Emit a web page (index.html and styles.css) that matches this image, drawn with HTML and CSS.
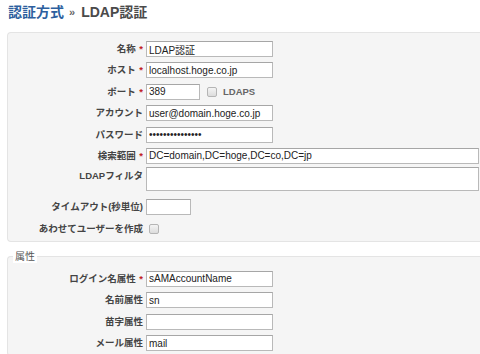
FILE: index.html
```html
<!DOCTYPE html>
<html lang="ja">
<head>
<meta charset="utf-8">
<link rel="stylesheet" href="styles.css">
</head>
<body>
<h1 class="title"><span class="crumb">認証方式</span><span class="sep">»</span><span class="current">LDAP認証</span></h1>

<div class="panel">
  <div class="row">
    <label class="lbl">名称 <span class="req">*</span></label>
    <div class="field"><input class="inp" type="text" value="LDAP認証"></div>
  </div>
  <div class="row">
    <label class="lbl">ホスト <span class="req">*</span></label>
    <div class="field"><input class="inp" type="text" value="localhost.hoge.co.jp"></div>
  </div>
  <div class="row">
    <label class="lbl">ポート <span class="req">*</span></label>
    <div class="field"><input class="inp port" type="text" value="389"><span class="chk"></span><span class="chk-text">LDAPS</span></div>
  </div>
  <div class="row">
    <label class="lbl">アカウント</label>
    <div class="field"><input class="inp" type="text" value="user@domain.hoge.co.jp"></div>
  </div>
  <div class="row">
    <label class="lbl">パスワード</label>
    <div class="field"><input class="inp" type="password" value="passwordpasswor"></div>
  </div>
  <div class="row">
    <label class="lbl">検索範囲 <span class="req">*</span></label>
    <div class="field"><input class="inp wide" type="text" value="DC=domain,DC=hoge,DC=co,DC=jp"></div>
  </div>
  <div class="row row-top">
    <label class="lbl">LDAPフィルタ</label>
    <div class="field"><textarea class="inp area"></textarea></div>
  </div>
  <div class="row row-timeout">
    <label class="lbl">タイムアウト(秒単位)</label>
    <div class="field"><input class="inp short" type="text" value=""></div>
  </div>
  <div class="row">
    <label class="lbl">あわせてユーザーを作成</label>
    <div class="field"><span class="chk first"></span></div>
  </div>
</div>

<fieldset class="panel attrs">
  <legend class="legend">属性</legend>
  <div class="row">
    <label class="lbl">ログイン名属性 <span class="req">*</span></label>
    <div class="field"><input class="inp" type="text" value="sAMAccountName"></div>
  </div>
  <div class="row">
    <label class="lbl">名前属性</label>
    <div class="field"><input class="inp" type="text" value="sn"></div>
  </div>
  <div class="row">
    <label class="lbl">苗字属性</label>
    <div class="field"><input class="inp" type="text" value=""></div>
  </div>
  <div class="row">
    <label class="lbl">メール属性</label>
    <div class="field"><input class="inp" type="text" value="mail"></div>
  </div>
</fieldset>
</body>
</html>
```

FILE: styles.css
```css
html, body {
  margin: 0;
  padding: 0;
  background: #fff;
  overflow: hidden;
}
body {
  width: 480px;
  height: 354px;
  padding: 0 0 0 7px;
  box-sizing: border-box;
  font-family: "Liberation Sans", "Noto Sans CJK JP", sans-serif;
  color: #333;
}
.title {
  margin: 0;
  height: 32px;
  padding-top: 3px;
  box-sizing: border-box;
  font-size: 14px;
  line-height: 18px;
  font-weight: bold;
  display: flex;
  align-items: flex-start;
}
.crumb {
  color: #2d5f9e;
  margin-left: 1px;
}
.sep {
  color: #666;
  font-size: 11px;
  margin: 0 6px 0 5px;
}
.current {
  color: #4a4a4a;
}
.panel {
  background: #f5f5f5;
  border: 1px solid #e4e4e4;
  border-right: none;
  border-radius: 4px 0 0 4px;
  padding: 8px 0 4px 0;
  display: flex;
  flex-direction: column;
  gap: 5.4px;
  width: 100%;
  box-sizing: border-box;
  margin: 0;
}
.attrs {
  margin-top: 9px;
  padding-top: 8px;
  gap: 5.6px;
  min-width: 0;
}
.legend {
  margin-left: 5px;
  padding: 0 2px;
  font-size: 10px;
  line-height: 12px;
  color: #555;
  background: #fff;
}
.row {
  display: grid;
  grid-template-columns: 135px 1fr;
  column-gap: 3px;
  align-items: center;
}
.row-top {
  align-items: start;
  margin-top: -2px;
}
.row-top .lbl {
  padding-top: 3px;
}
.row-timeout {
  margin-top: 2.5px;
}
.lbl {
  text-align: right;
  font-size: 9.5px;
  line-height: 12px;
  font-weight: bold;
  color: #444;
  white-space: nowrap;
}
.req {
  color: #c0201f;
  margin-left: 1px;
}
.field {
  display: flex;
  align-items: center;
  height: 16px;
}
.row-top .field {
  height: auto;
}
.inp {
  box-sizing: border-box;
  width: 127px;
  height: 16px;
  margin: 0;
  padding: 0 2px;
  border: 1px solid #b9b9b9;
  border-top-color: #a6a6a6;
  background: #fff;
  font-family: "Liberation Sans", "Noto Sans CJK JP", sans-serif;
  font-size: 10px;
  color: #222;
  outline: none;
  border-radius: 0;
}
.port {
  width: 54px;
}
.wide {
  width: 333px;
}
.short {
  width: 45px;
}
.area {
  width: 333px;
  height: 24px;
  resize: none;
  display: block;
}
.chk {
  display: inline-block;
  width: 8px;
  height: 8px;
  border: 1px solid #b5b5b5;
  border-radius: 2px;
  background: linear-gradient(#f4f4f4, #dcdcdc);
  margin-left: 7px;
}
.chk.first {
  margin-left: 3px;
}
.chk-text {
  margin-left: 6px;
  font-size: 9.5px;
  font-weight: bold;
  color: #666;
}
```
